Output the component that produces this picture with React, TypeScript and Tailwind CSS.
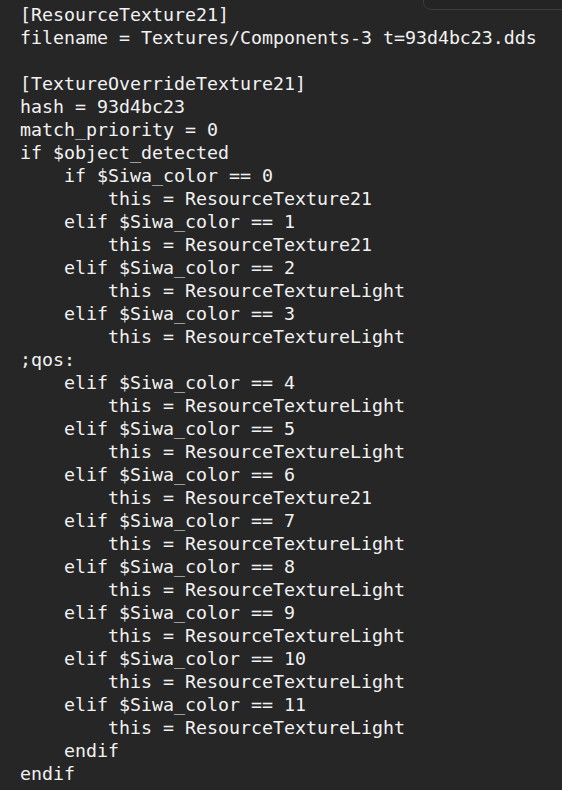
const lines: string[] = [
  '[ResourceTexture21]',
  'filename = Textures/Components-3 t=93d4bc23.dds',
  '',
  '[TextureOverrideTexture21]',
  'hash = 93d4bc23',
  'match_priority = 0',
  'if $object_detected',
  '    if $Siwa_color == 0',
  '        this = ResourceTexture21',
  '    elif $Siwa_color == 1',
  '        this = ResourceTexture21',
  '    elif $Siwa_color == 2',
  '        this = ResourceTextureLight',
  '    elif $Siwa_color == 3',
  '        this = ResourceTextureLight',
  ';qos:',
  '    elif $Siwa_color == 4',
  '        this = ResourceTextureLight',
  '    elif $Siwa_color == 5',
  '        this = ResourceTextureLight',
  '    elif $Siwa_color == 6',
  '        this = ResourceTexture21',
  '    elif $Siwa_color == 7',
  '        this = ResourceTextureLight',
  '    elif $Siwa_color == 8',
  '        this = ResourceTextureLight',
  '    elif $Siwa_color == 9',
  '        this = ResourceTextureLight',
  '    elif $Siwa_color == 10',
  '        this = ResourceTextureLight',
  '    elif $Siwa_color == 11',
  '        this = ResourceTextureLight',
  '    endif',
  'endif',
];

export default function App() {
  return (
    <div className="relative w-[562px] h-[790px] overflow-hidden bg-[#262626]">
      {/* toolbar edge peeking in at the top right */}
      <div className="absolute left-[423px] right-[-12px] top-[-20px] h-[30px] rounded-lg border border-[#3c3c3c] bg-[#242424]" />
      <pre className="pl-5 pt-[3px] font-['DejaVu_Sans_Mono',monospace] text-[18.27px] leading-[23px] text-[#f2f2f2]">
        {lines.map((l, i) => (
          <div key={i} className="h-[23px] whitespace-pre">
            {l}
          </div>
        ))}
      </pre>
    </div>
  );
}
